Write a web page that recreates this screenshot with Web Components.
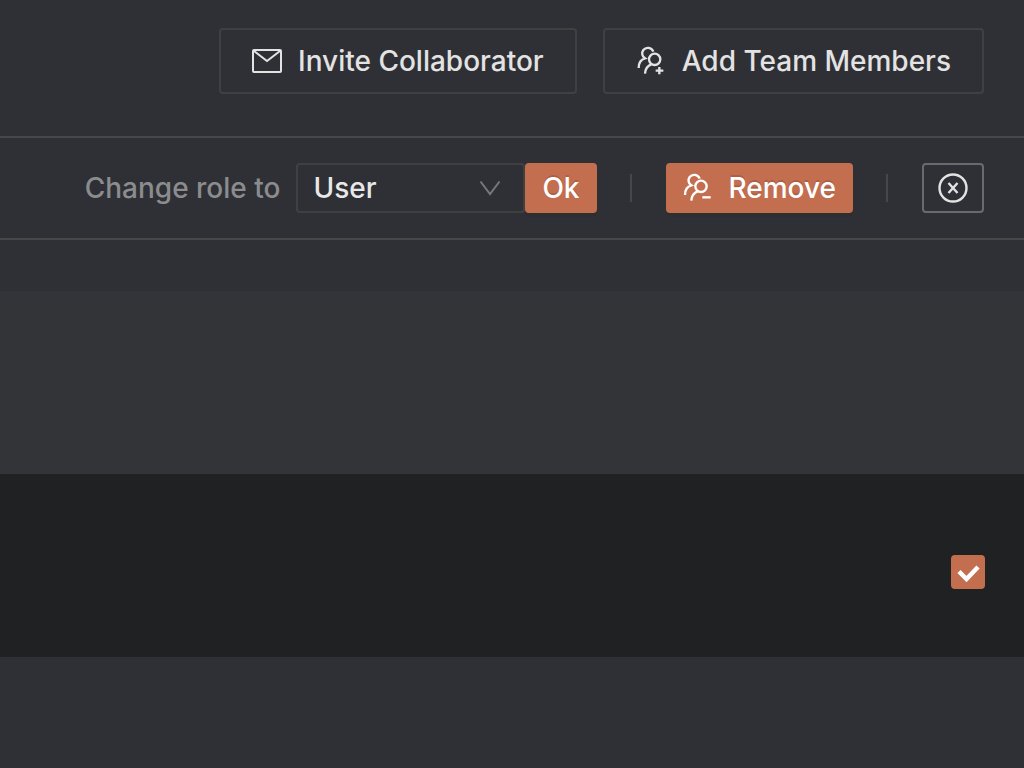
<!DOCTYPE html>
<html lang="en">
<head>
<meta charset="utf-8">
<meta name="viewport" content="width=device-width, initial-scale=1">
<title>Team members</title>
<style>
html { background: #2f3035; }
body { margin: 0; font-family: Inter, "Liberation Sans", sans-serif; font-size: 28px; font-weight: 450; line-height: 36px; color: #e3e3e3; }
</style>
</head>
<body>
<team-page></team-page>
<script>
const define = (name, html, setup) => {
  const template = document.createElement('template');
  template.innerHTML = html;
  customElements.define(name, class extends HTMLElement {
    constructor() {
      super();
      this.attachShadow({ mode: 'open' }).append(template.content.cloneNode(true));
    }
    connectedCallback() { if (setup) setup(this, this.shadowRoot); }
  });
};

const people = `<path d="M71 35 C66 22 49 20 41 30 C35 38 37 49 46 55 C35 58 27 68 27 84 M65 73 C53 77 47 87 46 101"/><circle cx="75" cy="58" r="17"/>`;
const icons = {
  mail: ['0 0 30 24', 30, 24, 2, `<rect x="1" y="1" width="28" height="22" rx="1"/><path d="M2 2 L15 12 L28 2"/>`],
  add: ['19 18 90 90', 30, 30, 7, people + `<path d="M78 92H101M89 81V103"/>`],
  remove: ['21 18 90 90', 30, 30, 7, people + `<path d="M79 91H104"/>`],
  close: ['0 0 30 30', 30, 30, 2.4, `<circle cx="15" cy="15" r="13.5"/><path d="M10.5 10 L19.5 20 M19.5 10 L10.5 20"/>`],
  down: ['0 0 22 16', 22, 16, 2, `<path d="M1.5 1.5 L11 14 L20.5 1.5"/>`]
};

define('ui-icon', `<style>
  :host { display: inline-flex; flex: none; }
  svg { display: block; fill: none; stroke: currentColor; }
</style><svg aria-hidden="true"></svg>`, (host, root) => {
  const [box, w, h, stroke, shapes] = icons[host.getAttribute('name')];
  const svg = root.querySelector('svg');
  svg.setAttribute('viewBox', box);
  svg.setAttribute('width', w);
  svg.setAttribute('height', h);
  svg.setAttribute('stroke-width', stroke);
  svg.innerHTML = shapes;
});

define('ui-button', `<style>
  :host { display: inline-flex; flex: none; }
  button { display: flex; align-items: center; justify-content: center; gap: 16px; box-sizing: border-box; width: 100%; height: 50px;
    margin: 0; padding: 0 15px; border: 2px solid #3f4041; border-radius: 4px; background: transparent; color: inherit;
    font: inherit; white-space: nowrap; cursor: pointer; }
  :host([size=large]) button { height: 66px; padding: 0 31px; }
  :host([kind=primary]) button { border-color: #c46e50; background: #c46e50; color: #fff; text-shadow: 0 -2px 0 rgba(0,0,0,.12); box-shadow: 0 4px 0 rgba(0,0,0,.04); }
  :host([kind=outline]) button { border-color: #696a6d; }
</style><button type="button"><slot name="icon"></slot><slot></slot></button>`, (host, root) => {
  if (host.hasAttribute('label')) root.querySelector('button').setAttribute('aria-label', host.getAttribute('label'));
});

define('role-select', `<style>
  :host { display: flex; align-items: center; gap: 16px; }
  label { color: #8b8c8e; white-space: nowrap; }
  .field { display: grid; align-items: center; width: 229px; }
  select { grid-area: 1 / 1; appearance: none; box-sizing: border-box; width: 100%; height: 50px; margin: 0; padding: 0 48px 0 15px;
    border: 2px solid #3f4041; border-radius: 4px; background: #2f3035; color: #e8e8e8; font: inherit; }
  ui-icon { grid-area: 1 / 1; justify-self: end; margin-right: 24px; color: #77787b; pointer-events: none; }
</style>
<label for="role">Change role to</label>
<div class="field"><select id="role"><option>User</option></select><ui-icon name="down"></ui-icon></div>`);

define('tool-divider', `<style>:host { display: block; flex: none; width: 2px; height: 28px; margin: 0 34px 0 33px; background: #46474a; }</style>`);

define('page-actions', `<style>
  :host { display: flex; justify-content: flex-end; gap: 26px; padding: 28px 40px 42px; }
</style>
<ui-button size="large"><ui-icon slot="icon" name="mail"></ui-icon>Invite Collaborator</ui-button>
<ui-button size="large"><ui-icon slot="icon" name="add"></ui-icon>Add Team Members</ui-button>`);

define('selection-bar', `<style>
  :host { display: flex; align-items: center; justify-content: flex-end; padding: 25px 40px; border: solid #454749; border-width: 2px 0; }
  .close { width: 62px; }
</style>
<role-select></role-select>
<ui-button kind="primary">Ok</ui-button>
<tool-divider></tool-divider>
<ui-button kind="primary"><ui-icon slot="icon" name="remove"></ui-icon>Remove</ui-button>
<tool-divider></tool-divider>
<ui-button class="close" kind="outline" label="Clear selection"><ui-icon slot="icon" name="close"></ui-icon></ui-button>`);

define('row-check', `<style>
  :host { display: block; }
  input { appearance: none; display: block; width: 34px; height: 34px; margin: 0; border-radius: 4px; background: #c46e50; }
  label { display: grid; }
  input, svg { grid-area: 1 / 1; }
  svg { width: 34px; height: 34px; fill: none; stroke: #fff; stroke-width: 4.5; pointer-events: none; visibility: hidden; }
  input:checked + svg { visibility: visible; }
</style>
<label><input type="checkbox" aria-label="Select member" checked><svg viewBox="0 0 34 34" aria-hidden="true"><path d="M8 16.5 L15.5 24 L27 12"/></svg></label>`);

define('member-table', `<style>
  :host { display: block; }
  table { width: 100%; border-collapse: collapse; }
  th { height: 51px; padding: 0; }
  td { box-sizing: border-box; height: 183px; padding: 12px 39px 0; background: #333438; }
  .selected td { background: #1f2122; }
  row-check { width: 34px; margin-left: auto; }
</style>
<table>
  <thead><tr><th></th></tr></thead>
  <tbody>
    <tr><td></td></tr>
    <tr class="selected"><td><row-check></row-check></td></tr>
  </tbody>
</table>`);

define('team-page', `<style>:host { display: block; }</style>
<page-actions></page-actions>
<selection-bar></selection-bar>
<member-table></member-table>`);
</script>
</body>
</html>
